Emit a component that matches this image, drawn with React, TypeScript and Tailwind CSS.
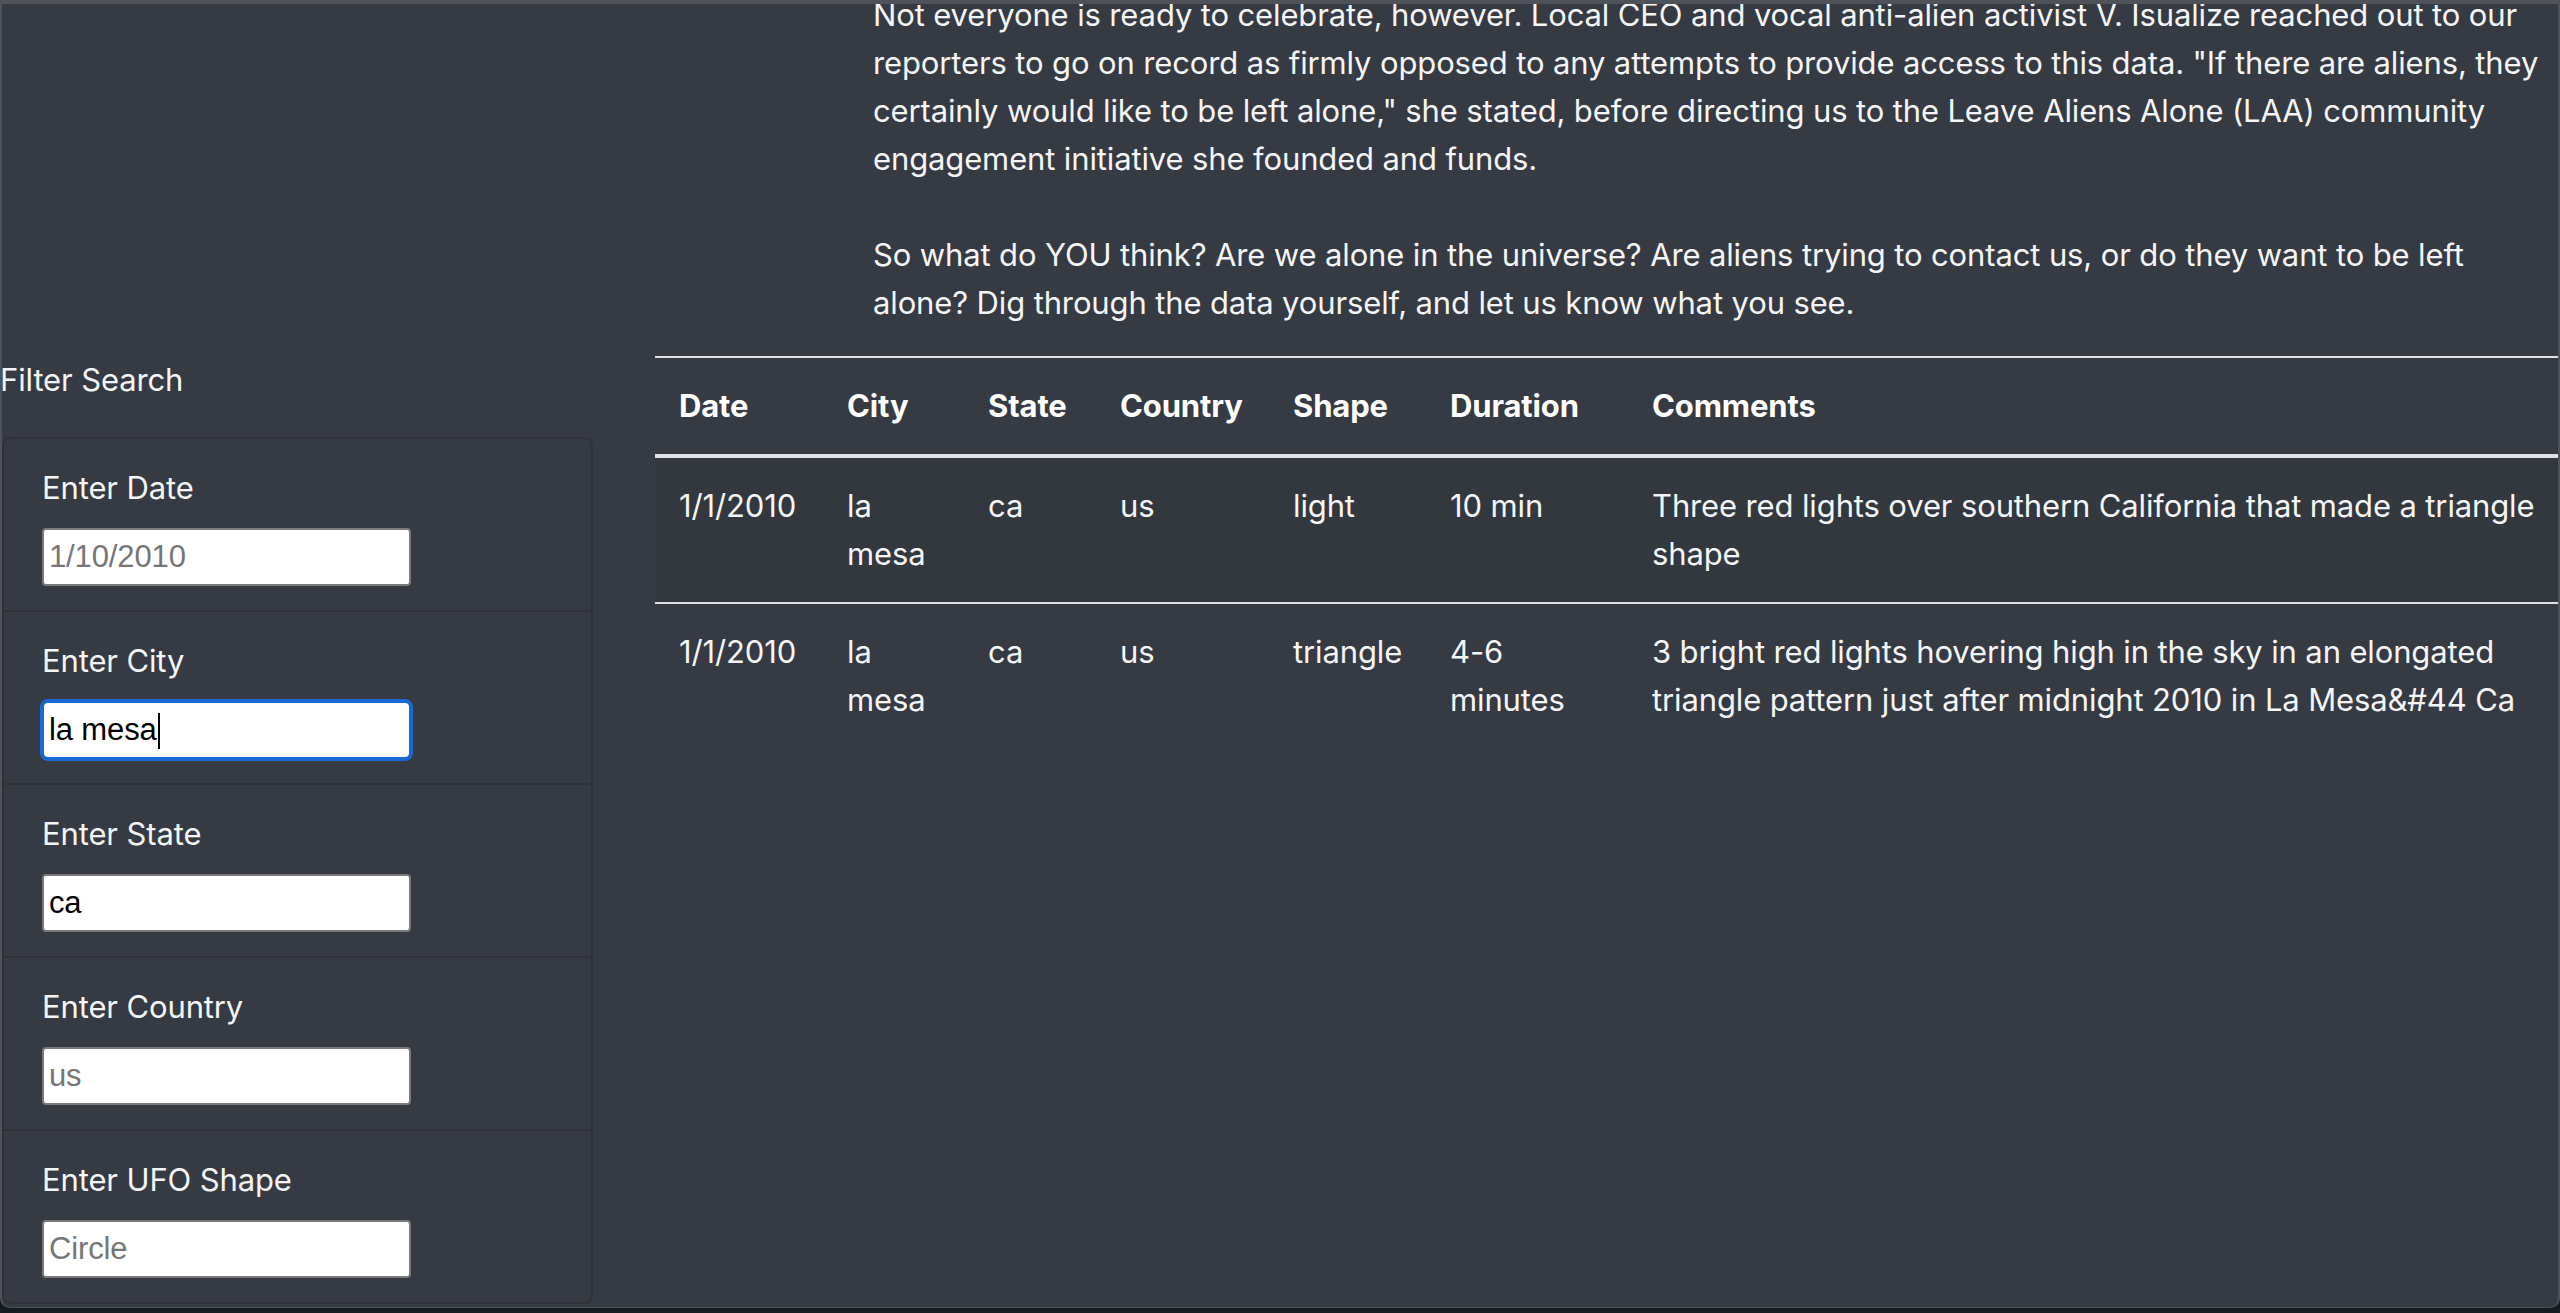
import React from "react";

const font = "font-['Inter','Liberation_Sans',sans-serif]";

const filters = [
  { label: "Enter Date", placeholder: "1/10/2010", value: "" },
  { label: "Enter City", placeholder: "", value: "la mesa", focused: true },
  { label: "Enter State", placeholder: "", value: "ca" },
  { label: "Enter Country", placeholder: "us", value: "" },
  { label: "Enter UFO Shape", placeholder: "Circle", value: "" },
];

const sightings = [
  {
    date: "1/1/2010",
    city: "la mesa",
    state: "ca",
    country: "us",
    shape: "light",
    duration: "10 min",
    comments: ["Three red lights over southern California that made a triangle", "shape"],
  },
  {
    date: "1/1/2010",
    city: "la mesa",
    state: "ca",
    country: "us",
    shape: "triangle",
    duration: "4-6 minutes",
    comments: [
      "3 bright red lights hovering high in the sky in an elongated",
      "triangle pattern just after midnight 2010 in La Mesa&#44 Ca",
    ],
  },
];

const columns = [
  { name: "Date", w: "w-[168px]" },
  { name: "City", w: "w-[141px]" },
  { name: "State", w: "w-[132px]" },
  { name: "Country", w: "w-[173px]" },
  { name: "Shape", w: "w-[157px]" },
  { name: "Duration", w: "w-[202px]" },
  { name: "Comments", w: "" },
];

function FilterItem({ f }: { f: (typeof filters)[number] }) {
  return (
    <li className="pt-[25px] pb-[24px] pl-[38px] pr-[40px]">
      <label className="block text-[31px] leading-[48px] tracking-[-0.13px] text-[#f4f5f6] mb-[16px]">{f.label}</label>
      <div className="relative w-[369px]">
        <input
          readOnly
          defaultValue={f.value}
          placeholder={f.placeholder}
          className={
            "block w-[369px] h-[58px] bg-white px-[5px] text-[31px] text-black placeholder:text-[#767676] font-['Liberation_Sans',Arial,sans-serif] " +
            (f.focused
              ? "border-2 border-[#1b69d6] outline-2 outline-[#1b69d6] rounded-[6px]"
              : "border-2 border-[#7a7a7a] rounded-[4px]")
          }
        />
        {f.focused && <span className="absolute left-[116px] top-[12px] h-[36px] w-[2px] bg-black" />}
      </div>
    </li>
  );
}

export default function App() {
  return (
    <div className={`h-screen bg-[#161a21] ${font}`}>
      <div className="h-[1308px] overflow-hidden rounded-b-[10px] border-t-4 border-x-2 border-b border-[#4f5359] bg-[#363a42] text-[#f4f5f6] tracking-[-0.13px]">
        {/* Intro text */}
        <p className="-mt-[13px] mb-[29px] pl-[871px] text-[31px] leading-[48px] whitespace-nowrap">
          Not everyone is ready to celebrate, however. Local CEO and vocal anti-alien activist V. Isualize reached out to our
          <br />
          reporters to go on record as firmly opposed to any attempts to provide access to this data. "If there are aliens, they
          <br />
          certainly would like to be left alone," she stated, before directing us to the Leave Aliens Alone (LAA) community
          <br />
          engagement initiative she founded and funds.
          <br />
          <br />
          So what do YOU think? Are we alone in the universe? Are aliens trying to contact us, or do they want to be left
          <br />
          alone? Dig through the data yourself, and let us know what you see.
        </p>

        <div className="flex">
          {/* Filters */}
          <aside className="w-[591px] shrink-0">
            <h2 className="-ml-[2px] text-[31px] leading-[48px] mb-[33px]">Filter Search</h2>
            <ul className="rounded-[8px] border-2 border-[#2f3339] divide-y-2 divide-[#2f3339]">
              {filters.map((f) => (
                <FilterItem key={f.label} f={f} />
              ))}
            </ul>
          </aside>

          {/* Results */}
          <div className="ml-[62px] flex-1">
            <table className="w-full table-fixed border-collapse text-[31px] leading-[48px]">
              <colgroup>
                {columns.map((c) => (
                  <col key={c.name} className={c.w} />
                ))}
              </colgroup>
              <thead>
                <tr className="border-t-2 border-b-4 border-[#dee2e6]">
                  {columns.map((c) => (
                    <th key={c.name} className="p-[24px] text-left font-bold text-white align-bottom">
                      {c.name}
                    </th>
                  ))}
                </tr>
              </thead>
              <tbody>
                {sightings.map((s, i) => (
                  <tr key={i} className={i % 2 === 0 ? "bg-black/5" : "border-t-2 border-[#dee2e6]"}>
                    <td className="p-[24px] align-top">{s.date}</td>
                    <td className="p-[24px] align-top">{s.city}</td>
                    <td className="p-[24px] align-top">{s.state}</td>
                    <td className="p-[24px] align-top">{s.country}</td>
                    <td className="p-[24px] align-top">{s.shape}</td>
                    <td className="p-[24px] align-top">{s.duration}</td>
                    <td className="p-[24px] align-top whitespace-nowrap">
                      {s.comments[0]}
                      <br />
                      {s.comments[1]}
                    </td>
                  </tr>
                ))}
              </tbody>
            </table>
          </div>
        </div>
      </div>
    </div>
  );
}
